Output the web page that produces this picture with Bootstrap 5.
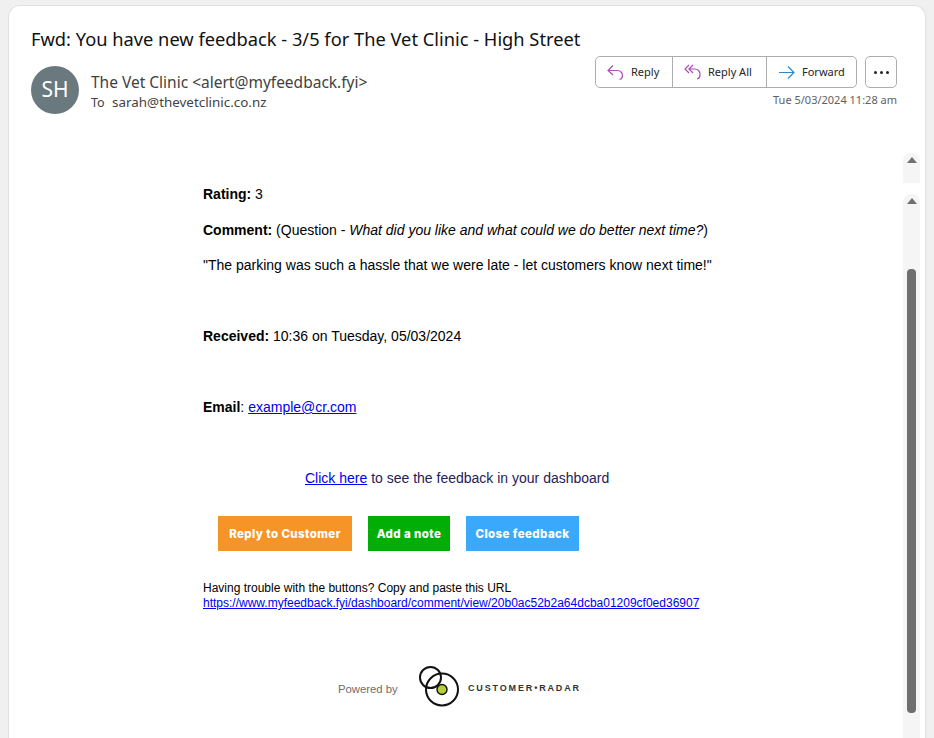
<!DOCTYPE html>
<html lang="en">
<head>
    <meta charset="UTF-8">
    <meta name="viewport" content="width=device-width, initial-scale=1.0">
    <title>Fwd: You have new feedback</title>
    <link href="https://cdn.jsdelivr.net/npm/bootstrap@5.3.0/dist/css/bootstrap.min.css" rel="stylesheet">
    <style>
        html, body { height: 738px; overflow: hidden; }
        body { background: #f0f0f0; font-family: "Noto Sans", sans-serif; color: #242424; }
        .mail-shell {
            height: 733px; margin: 5px 8px 0 8px; background: #fff;
            border: 1px solid #e0e0e0; border-bottom: 0; border-radius: 12px 12px 0 0;
        }
        .mail-head { padding: 20px 28px 0 22px; height: 147px; }
        .mail-subject { font-size: 18.27px; font-weight: 400; line-height: 26px; color: #111; margin: 0; white-space: nowrap; }
        .mail-meta { margin-top: 14px; }
        .mail-avatar {
            width: 48px; height: 48px; border-radius: 50%; background: #69797e; color: #fff;
            font-size: 21px; flex: none; margin-right: 12px;
        }
        .mail-from { font-size: 15.5px; line-height: 20px; color: #424242; padding-top: 6px; white-space: nowrap; }
        .mail-to { font-size: 13.4px; line-height: 20px; color: #424242; white-space: nowrap; }
        .mail-to span { font-size: 12.5px; margin-right: 4px; }
        .mail-btn-row { margin-top: -10px; }
        .mail-actions { border: 1px solid #adadad; border-radius: 5px; height: 32px; }
        .mail-action {
            font-size: 11px; color: #242424; height: 30px; padding-left: 11px; gap: 7px;
            border-right: 1px solid #adadad;
        }
        .mail-action:last-child { border-right: 0; }
        .mail-w1 { width: 77px; }
        .mail-w2 { width: 94px; }
        .mail-w3 { width: 89px; }
        .mail-more {
            width: 32px; height: 32px; border: 1px solid #adadad; border-radius: 5px; margin-left: 8px;
            gap: 3px;
        }
        .mail-more i { width: 3px; height: 3px; background: #242424; border-radius: 50%; display: block; }
        .mail-date { font-size: 11px; line-height: 16px; color: #616161; margin-top: 4px; white-space: nowrap; }
        .mail-body-wrap { height: 585px; }
        .mail-msg {
            flex: 1; padding: 33px 0 0 194px; font-family: "Liberation Sans", Arial, sans-serif;
            font-size: 14px; line-height: 17px; color: #000; white-space: nowrap;
        }
        .mail-msg p { margin: 0 0 19px 0; }
        .mail-msg .gap-tight { margin-bottom: 18px; }
        .mail-msg a { color: #0000ee; }
        .mail-msg .gap-big { margin-top: 54px; }
        .dash-line { margin-top: 54px; padding-left: 102px; color: #1f2158; }
        .cta-row { margin-top: 29px; padding-left: 15px; gap: 16px; }
        .cta-btn {
            height: 35px; line-height: 36px; font-family: Inter, sans-serif; font-weight: 800; font-size: 11.5px;
            color: #fff; text-align: center; letter-spacing: .4px;
        }
        .cta-orange { width: 134px; background: #f79428; }
        .cta-green { width: 82px; background: #00ae06; }
        .cta-blue { width: 113px; background: #3aa9fb; }
        .trouble { margin-top: 30px; font-size: 12px; line-height: 15px; }
        .powered { margin-top: 55px; padding-left: 135px; }
        .powered-by { font-size: 11.3px; color: #6d6d6d; width: 81px; padding-top: 6px; }
        .radar-name { font-size: 9px; font-weight: 700; color: #333; letter-spacing: 1.85px; margin-left: 8px; padding-top: 4px; }
        .scroll-col { width: 17px; margin-right: 5px; flex: none; gap: 11px; }
        .scroll-track { background: #f5f5f5; border-radius: 8px 8px 0 0; }
        .scroll-short { height: 30px; }
        .scroll-long { flex: 1; }
        .scroll-arrow {
            width: 0; height: 0; margin: 4px auto 0; border-left: 5px solid transparent;
            border-right: 5px solid transparent; border-bottom: 6px solid #707070;
        }
        .scroll-thumb { width: 9px; height: 444px; margin: 65px auto 0; background: #6f6f6f; border-radius: 4px; }
    </style>
</head>
<body>
    <div class="mail-shell">
        <div class="mail-head">
            <h1 class="mail-subject">Fwd: You have new feedback - 3/5 for The Vet Clinic - High Street</h1>
            <div class="d-flex mail-meta">
                <div class="mail-avatar d-flex align-items-center justify-content-center">SH</div>
                <div class="flex-grow-1">
                    <div class="mail-from">The Vet Clinic &lt;alert@myfeedback.fyi&gt;</div>
                    <div class="mail-to"><span>To</span> sarah@thevetclinic.co.nz</div>
                </div>
                <div class="mail-btn-row d-flex flex-column align-items-end">
                    <div class="d-flex">
                        <div class="mail-actions d-flex">
                            <div class="mail-action mail-w1 d-flex align-items-center">
                                <svg width="17" height="17" viewBox="0 0 17 17" fill="none" stroke="#a94fb5" stroke-width="1.2"><path d="M6 1.5 1 6.5l5 4.5M1 6.5h9.5a5 5 0 0 1 5 5v0a4 4 0 0 1-3 4"/></svg>
                                Reply
                            </div>
                            <div class="mail-action mail-w2 d-flex align-items-center">
                                <svg width="17" height="17" viewBox="0 0 17 17" fill="none" stroke="#a94fb5" stroke-width="1.2"><path d="M5 1 1 5l4 4M9 1 5 5l4 4M5 5h6a5 5 0 0 1 5 5v1a4 4 0 0 1-3 4"/></svg>
                                Reply All
                            </div>
                            <div class="mail-action mail-w3 d-flex align-items-center">
                                <svg width="17" height="17" viewBox="0 0 17 17" fill="none" stroke="#2c87c5" stroke-width="1.2"><path d="M1 8.5h15M10 2.5l6 6-6 6"/></svg>
                                Forward
                            </div>
                        </div>
                        <div class="mail-more d-flex align-items-center justify-content-center"><i></i><i></i><i></i></div>
                    </div>
                    <div class="mail-date">Tue 5/03/2024 11:28 am</div>
                </div>
            </div>
        </div>
        <div class="mail-body-wrap d-flex">
            <div class="mail-msg">
                <p><b>Rating:</b> 3</p>
                <p class="gap-tight"><b>Comment:</b> (Question - <i>What did you like and what could we do better next time?</i>)</p>
                <p>"The parking was such a hassle that we were late - let customers know next time!"</p>
                <p class="gap-big"><b>Received:</b> 10:36 on Tuesday, 05/03/2024</p>
                <p class="gap-big"><b>Email</b>: <a href="#">example@cr.com</a></p>
                <div class="dash-line"><a href="#">Click here</a> to see the feedback in your dashboard</div>
                <div class="cta-row d-flex">
                    <div class="cta-btn cta-orange">Reply to Customer</div>
                    <div class="cta-btn cta-green">Add a note</div>
                    <div class="cta-btn cta-blue">Close feedback</div>
                </div>
                <div class="trouble">Having trouble with the buttons? Copy and paste this URL<br><a href="#">https://www.myfeedback.fyi/dashboard/comment/view/20b0ac52b2a64dcba01209cf0ed36907</a></div>
                <div class="powered d-flex align-items-center">
                    <div class="powered-by">Powered by</div>
                    <svg width="41" height="41" viewBox="0 0 41 41" fill="none" stroke="#111" stroke-width="2"><circle cx="11.5" cy="11.5" r="10.5"/><circle cx="23" cy="23.5" r="16"/><circle cx="23" cy="23.5" r="5" fill="#b5cf35" stroke-width="1.4"/></svg>
                    <div class="radar-name">CUSTOMER•RADAR</div>
                </div>
            </div>
            <div class="scroll-col d-flex flex-column">
                <div class="scroll-track scroll-short"><div class="scroll-arrow"></div></div>
                <div class="scroll-track scroll-long"><div class="scroll-arrow"></div><div class="scroll-thumb"></div></div>
            </div>
        </div>
    </div>
    <script src="https://cdn.jsdelivr.net/npm/bootstrap@5.3.0/dist/js/bootstrap.bundle.min.js"></script>
</body>
</html>
